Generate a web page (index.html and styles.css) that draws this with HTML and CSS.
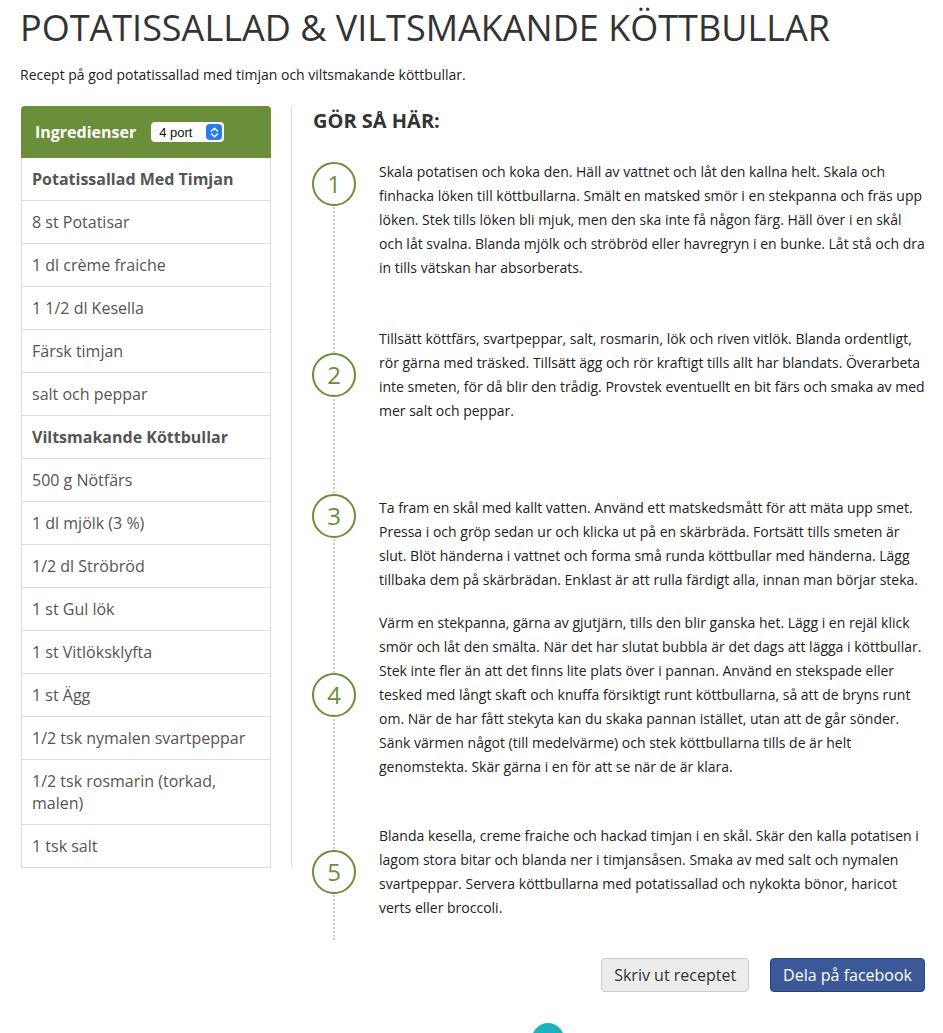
FILE: index.html
```html
<!DOCTYPE html>
<html lang="sv">
<head>
<meta charset="utf-8">
<title>Potatissallad &amp; viltsmakande köttbullar</title>
<link rel="stylesheet" href="styles.css">
</head>
<body>
<div class="page">
  <h1 class="title">POTATISSALLAD &amp; VILTSMAKANDE KÖTTBULLAR</h1>
  <p class="lead">Recept på god potatissallad med timjan och viltsmakande köttbullar.</p>

  <div class="recipe">
    <aside class="ingredients-col">
      <div class="ingredients">
        <div class="ing-head">
          <span class="ing-title">Ingredienser</span>
          <span class="portions">4 port
            <span class="stepper">
              <svg width="9" height="11" viewBox="0 0 9 11" aria-hidden="true"><path d="M1.5 4 L4.5 1.3 L7.5 4 M1.5 7 L4.5 9.7 L7.5 7" fill="none" stroke="#fff" stroke-width="1.5" stroke-linecap="round" stroke-linejoin="round"/></svg>
            </span>
          </span>
        </div>
        <ul class="ing-list">
          <li class="ing-group">Potatissallad Med Timjan</li>
          <li>8 st Potatisar</li>
          <li>1 dl crème fraiche</li>
          <li>1 1/2 dl Kesella</li>
          <li>Färsk timjan</li>
          <li>salt och peppar</li>
          <li class="ing-group">Viltsmakande Köttbullar</li>
          <li>500 g Nötfärs</li>
          <li>1 dl mjölk (3 %)</li>
          <li>1/2 dl Ströbröd</li>
          <li>1 st Gul lök</li>
          <li>1 st Vitlöksklyfta</li>
          <li>1 st Ägg</li>
          <li>1/2 tsk nymalen svartpeppar</li>
          <li>1/2 tsk rosmarin (torkad, malen)</li>
          <li>1 tsk salt</li>
        </ul>
      </div>
    </aside>

    <section class="method">
      <h2 class="method-title">GÖR SÅ HÄR:</h2>
      <ol class="steps">
        <li class="step step--first step--top">
          <span class="step-num">1</span>
          <p class="step-text">Skala potatisen och koka den. Häll av vattnet och låt den kallna helt. Skala och finhacka löken till köttbullarna. Smält en matsked smör i en stekpanna och fräs upp löken. Stek tills löken bli mjuk, men den ska inte få någon färg. Häll över i en skål och låt svalna. Blanda mjölk och ströbröd eller havregryn i en bunke. Låt stå och dra in tills vätskan har absorberats.</p>
        </li>
        <li class="step step--second">
          <span class="step-num">2</span>
          <p class="step-text">Tillsätt köttfärs, svartpeppar, salt, rosmarin, lök och riven vitlök. Blanda ordentligt, rör gärna med träsked. Tillsätt ägg och rör kraftigt tills allt har blandats. Överarbeta inte smeten, för då blir den trådig. Provstek eventuellt en bit färs och smaka av med mer salt och peppar.</p>
        </li>
        <li class="step step--third step--top">
          <span class="step-num">3</span>
          <p class="step-text">Ta fram en skål med kallt vatten. Använd ett matskedsmått för att mäta upp smet. Pressa i och gröp sedan ur och klicka ut på en skärbräda. Fortsätt tills smeten är slut. Blöt händerna i vattnet och forma små runda köttbullar med händerna. Lägg tillbaka dem på skärbrädan. Enklast är att rulla färdigt alla, innan man börjar steka.</p>
        </li>
        <li class="step step--fourth">
          <span class="step-num">4</span>
          <p class="step-text">Värm en stekpanna, gärna av gjutjärn, tills den blir ganska het. Lägg i en rejäl klick smör och låt den smälta. När det har slutat bubbla är det dags att lägga i köttbullar. Stek inte fler än att det finns lite plats över i pannan. Använd en stekspade eller tesked med långt skaft och knuffa försiktigt runt köttbullarna, så att de bryns runt om. När de har fått stekyta kan du skaka pannan istället, utan att de går sönder. Sänk värmen något (till medelvärme) och stek köttbullarna tills de är helt genomstekta. Skär gärna i en för att se när de är klara.</p>
        </li>
        <li class="step step--fifth">
          <span class="step-num">5</span>
          <p class="step-text">Blanda kesella, creme fraiche och hackad timjan i en skål. Skär den kalla potatisen i lagom stora bitar och blanda ner i timjansåsen. Smaka av med salt och nymalen svartpeppar. Servera köttbullarna med potatissallad och nykokta bönor, haricot verts eller broccoli.</p>
        </li>
      </ol>
      <div class="actions">
        <button class="btn btn--print" type="button">Skriv ut receptet</button>
        <button class="btn btn--facebook" type="button">Dela på facebook</button>
      </div>
    </section>
  </div>

  <footer class="site-footer">
    <span class="logo-mark"></span>
  </footer>
</div>
</body>
</html>
```

FILE: styles.css
```css
* { box-sizing: border-box; }

html, body {
  margin: 0;
  padding: 0;
  background: #fff;
}

body {
  font-family: "Open Sans", "Liberation Sans", sans-serif;
  color: #333;
}

.page {
  padding: 0 18px 0 20px;
}

.title {
  margin: 0;
  padding-top: 4px;
  font-size: 36px;
  line-height: 48px;
  font-weight: 400;
  color: #333;
}

.lead {
  margin: 13px 0 0;
  font-size: 14px;
  line-height: 20px;
  color: #222;
}

.recipe {
  display: flex;
  align-items: flex-start;
  margin-top: 21px;
}

/* ---------- Ingredients ---------- */
.ingredients-col {
  flex: 0 0 272px;
  width: 272px;
  padding: 0 20px 0 1px;
  border-right: 1px solid #ddd;
}

.ingredients {
  width: 250px;
}

.ing-head {
  display: flex;
  align-items: center;
  gap: 15px;
  height: 52px;
  padding: 0 13px 0 14px;
  background: #6b8e3a;
  border-radius: 4px 4px 0 0;
}

.ing-title {
  color: #fff;
  font-size: 16px;
  font-weight: 700;
}

.portions {
  display: inline-flex;
  align-items: center;
  justify-content: space-between;
  width: 73px;
  height: 20px;
  padding: 0 2px 0 8px;
  background: #fff;
  border-radius: 4px;
  font-family: "Liberation Sans", Arial, sans-serif;
  font-size: 13px;
  color: #111;
}

.stepper {
  display: inline-flex;
  align-items: center;
  justify-content: center;
  width: 16px;
  height: 16px;
  border-radius: 4px;
  background: #2a7bef;
}

.ing-list {
  list-style: none;
  margin: 0;
  padding: 0;
  border-left: 1px solid #ddd;
  border-right: 1px solid #ddd;
}

.ing-list li {
  padding: 10px 10px;
  border-bottom: 1px solid #ddd;
  font-size: 16px;
  line-height: 22px;
  color: #555;
}

.ing-list .ing-group {
  font-weight: 700;
}

/* ---------- Method ---------- */
.method {
  flex: 1 1 auto;
  padding: 1px 0 0 20px;
}

.method-title {
  margin: 0 0 0 1px;
  font-size: 20px;
  line-height: 28px;
  font-weight: 700;
  color: #333;
}

.steps {
  position: relative;
  list-style: none;
  margin: 0;
  padding: 0 0 20px;
}

.steps::before {
  content: "";
  position: absolute;
  left: 21px;
  top: 24px;
  bottom: 0;
  border-left: 2px dotted #ccc;
}

.step {
  display: flex;
  align-items: center;
  gap: 23px;
}

.step--first { margin-top: 25px; }
.step--second { margin-top: 47px; }
.step--third { margin-top: 73px; }
.step--fourth { margin-top: 19px; }
.step--fifth { margin-top: 45px; }

.step-num {
  position: relative;
  z-index: 1;
  flex: 0 0 44px;
  display: flex;
  align-items: center;
  justify-content: center;
  width: 44px;
  height: 44px;
  border: 2px solid #6b8e3a;
  border-radius: 50%;
  background: #fff;
  color: #6b8e3a;
  font-size: 24px;
  font-weight: 400;
  line-height: 1;
}

.step--top .step-num {
  align-self: flex-start;
  margin-top: 2px;
}

.step--third .step-num {
  margin-top: -2px;
}

.step-text {
  flex: 1 1 auto;
  margin: 0;
  font-size: 14px;
  line-height: 24px;
  color: #222;
}

.actions {
  display: flex;
  justify-content: flex-end;
  gap: 21px;
  margin-top: 18px;
}

.btn {
  height: 34px;
  padding: 0 12px;
  border-radius: 4px;
  font-family: "Open Sans", "Liberation Sans", sans-serif;
  font-size: 16px;
  cursor: pointer;
}

.btn--print {
  background: #ececec;
  border: 1px solid #ccc;
  color: #333;
}

.btn--facebook {
  background: #3b5998;
  border: 1px solid #2d4373;
  color: #fff;
  font-weight: 500;
}

/* ---------- Footer ---------- */
.site-footer {
  display: flex;
  justify-content: center;
  margin-top: 31px;
  padding-left: 150px;
}

.logo-mark {
  flex: 0 0 32px;
  width: 32px;
  height: 32px;
  border-radius: 50%;
  background: #1ab3bd;
}
```
